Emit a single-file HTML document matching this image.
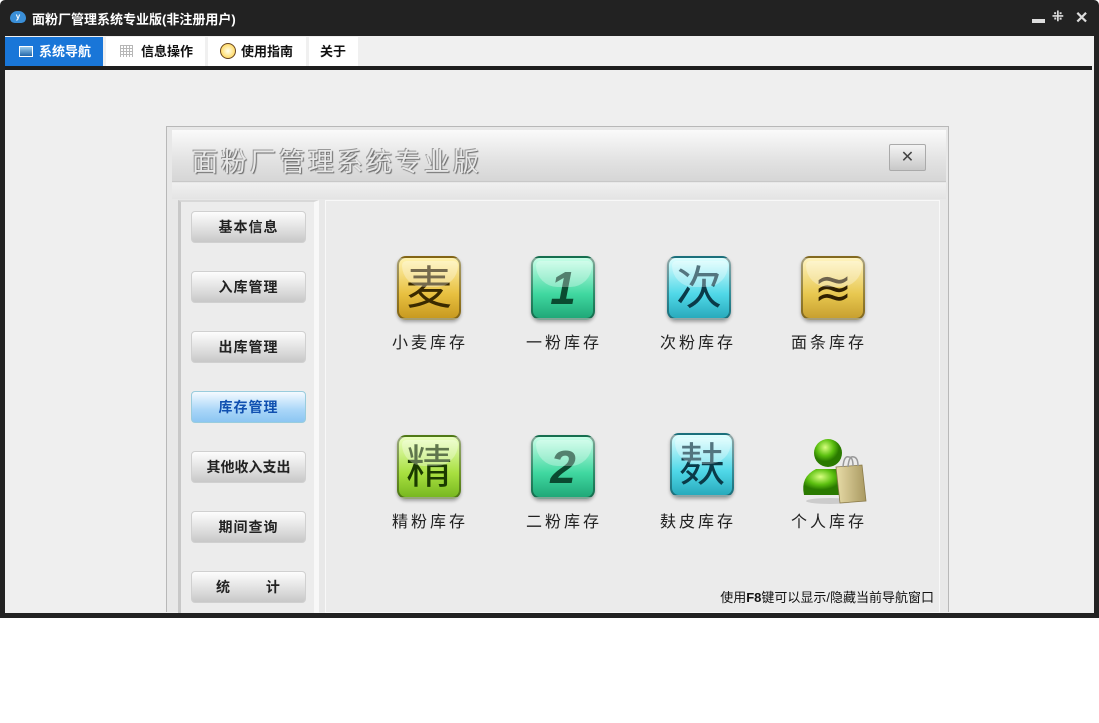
<!DOCTYPE html>
<html><head><meta charset="utf-8">
<style>
*{margin:0;padding:0;box-sizing:border-box}
body{width:1099px;height:723px;background:#fff;font-family:"Liberation Sans","Noto Sans CJK SC",sans-serif;position:relative;overflow:hidden}
.win{position:absolute;left:0;top:0;width:1099px;height:618px;background:#222;border-radius:5px 5px 0 0}
.title{position:absolute;left:32px;top:9px;color:#fff;font-size:13px;font-weight:bold}
.logo{position:absolute;left:10px;top:11px;width:16px;height:12px;background:#3a8fd8;border-radius:8px 8px 5px 5px;color:#fff;font-size:8px;font-weight:bold;text-align:center;line-height:12px}
.ctrl{position:absolute;top:8px;color:#ddd;font-size:16px;font-weight:bold}
.client{position:absolute;left:5px;top:36px;width:1089px;height:577px;background:#efefef}
.tabs{position:absolute;left:0;top:0;width:1089px;height:30px;background:#f0f0f0}
.tab{position:absolute;top:1px;height:29px;background:#fff;font-size:13px;font-weight:bold;color:#111;line-height:29px}
.tab.on{background:#1976d8;color:#fff}
.bar{position:absolute;left:0;top:30px;width:1087px;height:4px;background:#1e1e1e}
.panel{position:absolute;left:166px;top:126px;width:783px;height:486px;background:#e8e8e8;border:1px solid #b8b8b8;border-bottom:none}
.hdr{position:absolute;left:5px;top:3px;width:774px;height:52px;background:linear-gradient(#fafafa,#e2e2e2 60%,#d6d6d6);border-bottom:1px solid #c8c8c8}
.hdr span{position:absolute;left:20px;top:12px;font-size:26px;color:#e8e8e8;letter-spacing:3px;text-shadow:1px 1px 1px #666,-1px -1px 0 #999}
.xb{position:absolute;left:717px;top:14px;width:37px;height:27px;border:1px solid #aaa;border-radius:2px;background:linear-gradient(#f4f4f4,#c8c8c8);text-align:center;font-size:16px;line-height:25px;color:#444}
.hdr2{position:absolute;left:5px;top:56px;width:774px;height:16px;background:linear-gradient(#f0f0f0,#e4e4e4)}
.side{position:absolute;left:11px;top:73px;width:141px;height:413px;background:#ececec;border-left:3px solid #c8c8c8;border-top:2px solid #d8d8d8;border-right:5px solid #f8f8f8}
.btn{position:absolute;left:10px;width:115px;height:32px;border-radius:4px;background:linear-gradient(#fdfdfd,#dedede 60%,#c8c8c8);border:1px solid #d0d0d0;font-size:14px;font-weight:bold;color:#222;text-align:center;line-height:30px;letter-spacing:1px}
.btn.on{background:linear-gradient(#f4faff,#a9d6f8 60%,#8cc6f2);color:#1050b0;border-color:#9cd}
.content{position:absolute;left:158px;top:73px;width:615px;height:413px;background:#ebebeb;border:1px solid #f8f8f8}
.ic{position:absolute;width:64px;height:64px;border-radius:9px;border:2px solid rgba(0,0,0,.35);box-shadow:0 2px 3px rgba(0,0,0,.3);text-align:center;font-size:46px;line-height:60px;overflow:hidden}
.ic:after{content:"";position:absolute;left:3px;top:3px;width:56px;height:26px;border-radius:6px 6px 30px 30px;background:rgba(255,255,255,.3)}
.lb{position:absolute;font-size:16px;color:#222;letter-spacing:3px;width:110px;text-align:center}
.hint{position:absolute;right:5px;bottom:6px;font-size:13px;color:#111}
</style></head><body>
<div class="win">
 <div class="logo">y</div>
 <div class="title">面粉厂管理系统专业版(非注册用户)</div>
 <div style="position:absolute;left:1032px;top:19px;width:13px;height:4px;background:#ddd"></div>
 <div class="ctrl" style="left:1052px;font-size:14px">⁜</div>
 <div class="ctrl" style="left:1075px">✕</div>
 <div class="client">
  <div class="tabs">
   <div class="tab on" style="left:0;width:98px;padding-left:14px"><span style="display:inline-block;width:14px;height:11px;border:1px solid #fff;background:linear-gradient(#9ce,#26a);vertical-align:-1px;margin-right:6px"></span>系统导航</div>
   <div class="tab" style="left:101px;width:99px;padding-left:14px"><span style="display:inline-block;width:13px;height:12px;background:repeating-linear-gradient(90deg,#888 0 1px,transparent 1px 3px),repeating-linear-gradient(#888 0 1px,transparent 1px 3px);vertical-align:-1px;margin-right:8px;opacity:.6"></span>信息操作</div>
   <div class="tab" style="left:203px;width:98px;padding-left:12px"><span style="display:inline-block;width:16px;height:16px;border-radius:50%;border:1px solid #642;background:radial-gradient(#ffe,#fc3);vertical-align:-3px;margin-right:5px"></span>使用指南</div>
   <div class="tab" style="left:304px;width:49px;padding-left:11px">关于</div>
  </div>
  <div class="bar"></div>
 </div>
 <div class="panel">
  <div class="hdr"><span>面粉厂管理系统专业版</span><div class="xb">✕</div></div>
  <div class="hdr2"></div>
  <div class="side">
   <div class="btn" style="top:9px">基本信息</div>
   <div class="btn" style="top:69px">入库管理</div>
   <div class="btn" style="top:129px">出库管理</div>
   <div class="btn on" style="top:189px">库存管理</div>
   <div class="btn" style="top:249px;letter-spacing:0">其他收入支出</div>
   <div class="btn" style="top:309px">期间查询</div>
   <div class="btn" style="top:369px;word-spacing:30px">统 计</div>
  </div>
  <div class="content">
   <div class="ic" style="left:71px;top:55px;background:linear-gradient(#fff3b0,#e8c040 60%,#c89a20);color:#3a2a00">麦</div>
   <div class="ic" style="left:205px;top:55px;background:linear-gradient(#c8ffe8,#40d8a0 60%,#20a878);color:#0a4a30;font-weight:bold;font-style:italic">1</div>
   <div class="ic" style="left:341px;top:55px;background:linear-gradient(#e0ffff,#50d8e8 60%,#28aabc);color:#0a3a48">次</div>
   <div class="ic" style="left:475px;top:55px;background:linear-gradient(#fff4c0,#e8c850 60%,#c8a030);color:#302000">≋</div>
   <div class="lb" style="left:49px;top:128px">小麦库存</div>
   <div class="lb" style="left:183px;top:128px">一粉库存</div>
   <div class="lb" style="left:317px;top:128px">次粉库存</div>
   <div class="lb" style="left:448px;top:128px">面条库存</div>

   <div class="ic" style="left:71px;top:234px;background:linear-gradient(#eaffc0,#a8e040 60%,#78b820);color:#1a3a00">精</div>
   <div class="ic" style="left:205px;top:234px;background:linear-gradient(#c8ffe8,#40d8a0 60%,#20a878);color:#0a4a30;font-weight:bold;font-style:italic">2</div>
   <div class="ic" style="left:344px;top:232px;background:linear-gradient(#e0ffff,#50d8e8 60%,#28aabc);color:#0a3a48">麸</div>
   <svg style="position:absolute;left:472px;top:232px" width="70" height="72" viewBox="0 0 70 72">
    <defs><radialGradient id="g" cx="40%" cy="30%"><stop offset="0" stop-color="#d8ff80"/><stop offset=".6" stop-color="#5cc010"/><stop offset="1" stop-color="#2a7a00"/></radialGradient>
    <linearGradient id="b" x1="0" x2="1"><stop offset="0" stop-color="#e8dca8"/><stop offset="1" stop-color="#a89860"/></linearGradient></defs>
    <ellipse cx="32" cy="68" rx="24" ry="3" fill="#ccc"/>
    <path d="M6 62 Q2 44 18 36 L40 36 Q50 44 48 62 Z" fill="url(#g)"/>
    <circle cx="30" cy="20" r="14" fill="url(#g)"/>
    <path d="M38 34 L64 32 L68 68 L42 70 Z" fill="url(#b)" stroke="#8a7a48" stroke-width=".8"/>
    <path d="M45 34 Q46 22 51 24 Q55 24 55 33 M50 34 Q51 22 56 24 Q60 25 60 33" fill="none" stroke="#999" stroke-width="1.5"/>
   </svg>
   <div class="lb" style="left:49px;top:307px">精粉库存</div>
   <div class="lb" style="left:183px;top:307px">二粉库存</div>
   <div class="lb" style="left:317px;top:307px">麸皮库存</div>
   <div class="lb" style="left:448px;top:307px">个人库存</div>
   <div class="hint">使用<b>F8</b>键可以显示/隐藏当前导航窗口</div>
  </div>
 </div>
</div>
</body></html>
